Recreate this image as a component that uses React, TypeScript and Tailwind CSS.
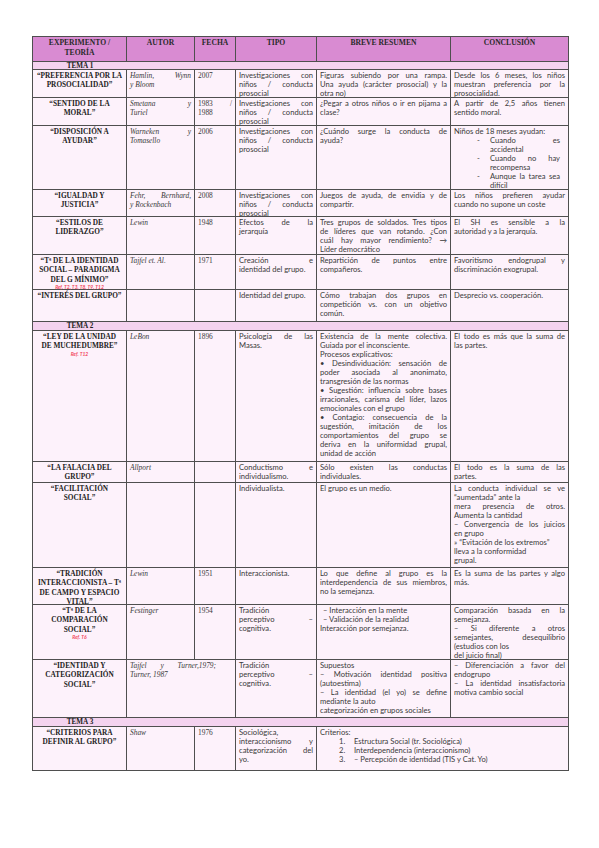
import clsx from 'clsx'
import type { ReactNode } from 'react'

type Row = {
  title: string[]
  refs?: string
  autor?: string[]
  autorWide?: boolean
  fecha?: string[]
  tipo?: string[]
  resumen?: string[] | ReactNode
  resumenWide?: boolean
  conclusion?: string[] | ReactNode
  h: string
}

const serif = "font-['Liberation_Serif',serif]"
const cell = 'border border-[#4f4f4f] bg-[#fdf2fb] p-0 align-top'

const investigaciones = ['Investigaciones con|niños / conducta|prosocial']

// each string is a paragraph, '|' splits the lines; all lines but the last are justified
function Txt({ paras, className }: { paras: string[]; className?: string }) {
  return (
    <div className={className}>
      {paras.map((p, i) => {
        const lines = p.split('|')
        return (
          <p key={i}>
            {lines.map((l, j) => (
              <span
                key={j}
                className={clsx('block', j < lines.length - 1 && 'text-justify [text-align-last:justify]')}
              >
                {l}
              </span>
            ))}
          </p>
        )
      })}
    </div>
  )
}

function Content({ value }: { value?: string[] | ReactNode }) {
  if (!value) return null
  if (Array.isArray(value) && value.every((v) => typeof v === 'string')) return <Txt paras={value as string[]} />
  return <>{value}</>
}

function DashItem({ lines }: { lines: string[] }) {
  return (
    <div className="flex">
      <span className="w-[14px] shrink-0 pl-[1px]">-</span>
      <Txt paras={[lines.join('|')]} className="flex-1" />
    </div>
  )
}

// Word rows have an exact height: the text may run over the bottom line
function Box({ h, className, children }: { h: string; className?: string; children?: ReactNode }) {
  return <div className={clsx(h, 'px-[3px] pt-[1px]', className)}>{children}</div>
}

const rows: (Row | string)[] = [
  'TEMA 1',
  {
    title: ['“PREFERENCIA POR LA', 'PROSOCIALIDAD”'],
    autor: ['Hamlin, Wynn|y Bloom'],
    fecha: ['2007'],
    tipo: investigaciones,
    resumen: ['Figuras subiendo por una rampa.|Una ayuda (carácter prosocial) y la|otra no)'],
    conclusion: ['Desde los 6 meses, los niños|muestran preferencia por la|prosocialidad.'],
    h: 'h-[27px]',
  },
  {
    title: ['“SENTIDO DE LA', 'MORAL”'],
    autor: ['Smetana y|Turiel'],
    fecha: ['1983 /|1988'],
    tipo: investigaciones,
    resumen: ['¿Pegar a otros niños o ir en pijama a|clase?'],
    conclusion: ['A partir de 2,5 años tienen|sentido moral.'],
    h: 'h-[27px]',
  },
  {
    title: ['“DISPOSICIÓN A', 'AYUDAR”'],
    autor: ['Warneken y|Tomasello'],
    fecha: ['2006'],
    tipo: investigaciones,
    resumen: ['¿Cuándo surge la conducta de|ayuda?'],
    conclusion: (
      <div>
        <p>Niños de 18 meses ayudan:</p>
        <div className="pl-[22px] pr-[5px]">
          <DashItem lines={['Cuando es', 'accidental']} />
          <DashItem lines={['Cuando no hay', 'recompensa']} />
          <DashItem lines={['Aunque la tarea sea', 'difícil']} />
        </div>
      </div>
    ),
    h: 'h-[63px]',
  },
  {
    title: ['“IGUALDAD Y', 'JUSTICIA”'],
    autor: ['Fehr, Bernhard,|y Rockenbach'],
    fecha: ['2008'],
    tipo: investigaciones,
    resumen: ['Juegos de ayuda, de envidia y de|compartir.'],
    conclusion: ['Los niños prefieren ayudar|cuando no supone un coste'],
    h: 'h-[26px]',
  },
  {
    title: ['“ESTILOS DE', 'LIDERAZGO”'],
    autor: ['Lewin'],
    fecha: ['1948'],
    tipo: ['Efectos de la|jerarquía'],
    resumen: ['Tres grupos de soldados. Tres tipos|de líderes que van rotando. ¿Con|cuál hay mayor rendimiento? →|Líder democrático'],
    conclusion: ['El SH es sensible a la|autoridad y a la jerarquía.'],
    h: 'h-[37px]',
  },
  {
    title: ['“Tª DE LA IDENTIDAD', 'SOCIAL – PARADIGMA', 'DEL G MÍNIMO”'],
    refs: 'Ref. T2, T3, T8, T9, T12',
    autor: ['Tajfel et. Al.'],
    fecha: ['1971'],
    tipo: ['Creación e|identidad del grupo.'],
    resumen: ['Repartición de puntos entre|compañeros.'],
    conclusion: ['Favoritismo endogrupal y|discriminación exogrupal.'],
    h: 'h-[34px]',
  },
  {
    title: ['“INTERÉS DEL GRUPO”'],
    tipo: ['Identidad del grupo.'],
    resumen: ['Cómo trabajan dos grupos en|competición vs. con un objetivo|común.'],
    conclusion: ['Desprecio vs. cooperación.'],
    h: 'h-[31px]',
  },
  'TEMA 2',
  {
    title: ['“LEY DE LA UNIDAD', 'DE MUCHEDUMBRE”'],
    refs: 'Ref. T12',
    autor: ['LeBon'],
    fecha: ['1896'],
    tipo: ['Psicología de las|Masas.'],
    resumen: [
      'Existencia de la mente colectiva.|Guiada por el inconsciente.',
      'Procesos explicativos:',
      '• Desindividuación: sensación de|poder asociada al anonimato,|transgresión de las normas',
      '• Sugestión: influencia sobre bases|irracionales, carisma del líder, lazos|emocionales con el grupo',
      '• Contagio: consecuencia de la|sugestión, imitación de los|comportamientos del grupo se|deriva en la uniformidad grupal,|unidad de acción',
    ],
    conclusion: ['El todo es más que la suma de|las partes.'],
    h: 'h-[130px]',
  },
  {
    title: ['“LA FALACIA DEL', 'GRUPO”'],
    autor: ['Allport'],
    tipo: ['Conductismo e|individualismo.'],
    resumen: ['Sólo existen las conductas|individuales.'],
    conclusion: ['El todo es la suma de las|partes.'],
    h: 'h-[20px]',
  },
  {
    title: ['“FACILITACIÓN', 'SOCIAL”'],
    tipo: ['Individualista.'],
    resumen: ['El grupo es un medio.'],
    conclusion: [
      'La conducta individual se ve|“aumentada” ante la',
      'mera presencia de otros.|Aumenta la cantidad',
      '– Convergencia de los juicios|en grupo',
      '» “Evitación de los extremos”',
      'lleva a la conformidad',
      'grupal.',
    ],
    h: 'h-[84px]',
  },
  {
    title: ['“TRADICIÓN', 'INTERACCIONISTA – Tª', 'DE CAMPO Y ESPACIO', 'VITAL”'],
    autor: ['Lewin'],
    fecha: ['1951'],
    tipo: ['Interaccionista.'],
    resumen: ['Lo que define al grupo es la|interdependencia de sus miembros,|no la semejanza.'],
    conclusion: ['Es la suma de las partes y algo|más.'],
    h: 'h-[36px]',
  },
  {
    title: ['“Tª DE LA', 'COMPARACIÓN', 'SOCIAL”'],
    refs: 'Ref. T6',
    autor: ['Festinger'],
    fecha: ['1954'],
    tipo: ['Tradición|perceptivo –|cognitiva.'],
    resumen: (
      <div>
        <p className="pl-[3px]">– Interacción en la mente</p>
        <p className="pl-[3px]">– Validación de la realidad</p>
        <p>Interacción por semejanza.</p>
      </div>
    ),
    conclusion: [
      'Comparación basada en la|semejanza.',
      '– Si diferente a otros|semejantes, desequilibrio|(estudios con los',
      'del juicio final)',
    ],
    h: 'h-[54px]',
  },
  {
    title: ['“IDENTIDAD Y', 'CATEGORIZACIÓN', 'SOCIAL”'],
    autor: ['Tajfel y Turner,1979;|Turner, 1987'],
    autorWide: true,
    tipo: ['Tradición|perceptivo –|cognitiva.'],
    resumen: [
      'Supuestos',
      '– Motivación identidad positiva|(autoestima)',
      '– La identidad (el yo) se define|mediante la auto',
      'categorización en grupos sociales',
    ],
    conclusion: ['– Diferenciación a favor del|endogrupo', '– La identidad insatisfactoria|motiva cambio social'],
    h: 'h-[57px]',
  },
  'TEMA 3',
  {
    title: ['“CRITERIOS PARA', 'DEFINIR AL GRUPO”'],
    autor: ['Shaw'],
    fecha: ['1976'],
    tipo: ['Sociológica,', 'interaccionismo y|categorización del|yo.'],
    resumen: (
      <div>
        <p>Criterios:</p>
        <ol className="pl-[19px]">
          {['Estructura Social (tr. Sociológica)', 'Interdependencia (interaccionismo)', '– Percepción de identidad (TIS y Cat. Yo)'].map(
            (t, i) => (
              <li key={t} className="flex">
                <span className="w-[15px] shrink-0">{i + 1}.</span>
                <span>{t}</span>
              </li>
            )
          )}
        </ol>
      </div>
    ),
    resumenWide: true,
    h: 'h-[43px]',
  },
]

export default function App() {
  return (
    <div className="min-h-[848px] bg-white pl-[32px] pt-[36px]">
      <table className="w-[536px] table-fixed border-collapse border-[1.5px] border-[#666] font-['Lato',sans-serif] text-[7.6px] leading-[9px] text-[#3a3a3a]">
        <colgroup>
          <col className="w-[94px]" />
          <col className="w-[68px]" />
          <col className="w-[41px]" />
          <col className="w-[81px]" />
          <col className="w-[134px]" />
          <col className="w-[118px]" />
        </colgroup>
        <thead>
          <tr className="h-[25px]">
            {['EXPERIMENTO /|TEORÍA', 'AUTOR', 'FECHA', 'TIPO', 'BREVE RESUMEN', 'CONCLUSIÓN'].map((h) => (
              <th
                key={h}
                className={`border border-[#4f4f4f] bg-[#d98bd2] px-[3px] pt-[1px] align-top text-center ${serif} text-[7.6px] font-bold leading-[9.5px] text-[#2a2a2a]`}
              >
                {h.split('|').map((l) => (
                  <span key={l} className="block">
                    {l}
                  </span>
                ))}
              </th>
            ))}
          </tr>
        </thead>
        <tbody>
          {rows.map((r, i) =>
            typeof r === 'string' ? (
              <tr key={r}>
                <td colSpan={6} className="border border-[#4f4f4f] bg-[#f4d3ef] p-0">
                  <div
                    className={clsx(
                      `w-[94px] text-center ${serif} text-[7.2px] font-bold leading-[8px] text-[#222]`,
                      i === 0 ? 'h-[7px]' : 'h-[8px]'
                    )}
                  >
                    {r}
                  </div>
                </td>
              </tr>
            ) : (
              <tr key={r.title.join()}>
                <td className={clsx(cell, 'text-center')}>
                  <Box h={r.h}>
                    <div className={`${serif} text-[7.3px] font-bold leading-[9.3px] text-[#222]`}>
                      {r.title.map((l) => (
                        <span key={l} className="block">
                          {l}
                        </span>
                      ))}
                    </div>
                    {r.refs && (
                      <div className="text-[5px] font-bold italic leading-[6px] text-[#f24a5e]">{r.refs}</div>
                    )}
                  </Box>
                </td>
                <td colSpan={r.autorWide ? 2 : 1} className={clsx(cell, serif, 'text-[7.4px] italic')}>
                  <Box h={r.h}>{r.autor && <Txt paras={r.autor} className={clsx(r.autorWide && 'pr-[16px]')} />}</Box>
                </td>
                {!r.autorWide && (
                  <td className={clsx(cell, serif, 'text-[7.4px]')}>
                    <Box h={r.h}>{r.fecha && <Txt paras={r.fecha} />}</Box>
                  </td>
                )}
                <td className={cell}>
                  <Box h={r.h}>{r.tipo && <Txt paras={r.tipo} />}</Box>
                </td>
                <td colSpan={r.resumenWide ? 2 : 1} className={cell}>
                  <Box h={r.h}>
                    <Content value={r.resumen} />
                  </Box>
                </td>
                {!r.resumenWide && (
                  <td className={cell}>
                    <Box h={r.h}>
                      <Content value={r.conclusion} />
                    </Box>
                  </td>
                )}
              </tr>
            )
          )}
        </tbody>
      </table>
    </div>
  )
}
